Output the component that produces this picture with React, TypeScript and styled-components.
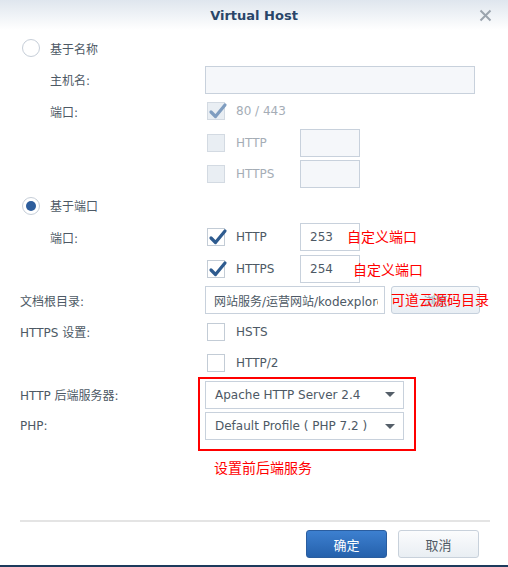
import React from 'react';
import styled, { createGlobalStyle, css } from 'styled-components';

const Global = createGlobalStyle`
  html, body { margin: 0; padding: 0; background: #ffffff; }
  body {
    font-family: "DejaVu Sans", "Noto Sans CJK SC", sans-serif;
    font-size: 12px;
    color: #4d5965;
  }
  * { box-sizing: border-box; }
`;

const Dialog = styled.div`
  width: 508px;
  height: 567px;
  display: flex;
  flex-direction: column;
  background: #ffffff;
  border-bottom: 2px solid #1d3a5c;
`;

const TitleBar = styled.div`
  height: 30px;
  flex: none;
  display: grid;
  grid-template-columns: 1fr auto 1fr;
  align-items: center;
  background: linear-gradient(#dfe6ee, #ffffff);
`;

const Title = styled.div`
  grid-column: 2;
  font-size: 13px;
  font-weight: bold;
  color: #2a4669;
`;

const Close = styled.div`
  grid-column: 3;
  justify-self: end;
  margin-right: 16px;
  width: 13px;
  height: 13px;
  display: flex;
`;

const Body = styled.div`
  flex: 1;
  display: flex;
  flex-direction: column;
  gap: 3.5px;
  padding: 4px 0 0 20px;
`;

const Row = styled.div`
  display: flex;
  align-items: center;
  height: 28px;
`;

const Label = styled.div<{ $indent?: boolean }>`
  width: 185px;
  flex: none;
  padding-left: ${(p) => (p.$indent ? '30px' : '0')};
  color: #4d5965;
`;

const RadioWrap = styled.div`
  display: flex;
  align-items: center;
  gap: 10px;
  margin-left: 2px;
`;

const RadioCircle = styled.span<{ $on?: boolean }>`
  width: 18px;
  height: 18px;
  border-radius: 50%;
  border: 1px solid #c6ced8;
  background: #ffffff;
  display: flex;
  align-items: center;
  justify-content: center;
  &::after {
    content: '';
    width: 10px;
    height: 10px;
    border-radius: 50%;
    background: ${(p) => (p.$on ? '#2d5d9c' : 'transparent')};
  }
`;

const Control = styled.div`
  display: flex;
  align-items: center;
`;

const CheckItem = styled.div<{ $disabled?: boolean }>`
  width: 95px;
  flex: none;
  display: flex;
  align-items: center;
  gap: 11px;
  padding-left: 2px;
  color: ${(p) => (p.$disabled ? '#a5adb6' : '#4d5965')};
`;

const Box = styled.span<{ $disabled?: boolean }>`
  width: 18px;
  height: 18px;
  flex: none;
  position: relative;
  border: 1px solid ${(p) => (p.$disabled ? '#d3dae2' : '#c3ccd6')};
  background: ${(p) => (p.$disabled ? '#e9eef3' : '#ffffff')};
  & > svg {
    position: absolute;
    left: 0;
    top: -2px;
  }
`;

const fieldBase = css`
  height: 28px;
  border: 1px solid #c8d1dc;
  font-family: "DejaVu Sans", "Noto Sans CJK SC", sans-serif;
  font-size: 12px;
  color: #4d5965;
  outline: none;
`;

const TextField = styled.input<{ $w: number; $disabled?: boolean }>`
  ${fieldBase};
  width: ${(p) => p.$w}px;
  padding: 0 6px 0 ${(p) => (p.$w < 80 ? 9 : 8)}px;
  background: ${(p) => (p.$disabled ? '#f5f7fa' : '#ffffff')};
`;

const PortWrap = styled.div`
  position: relative;
  display: flex;
`;

const Note = styled.span<{ $left: number; $dy?: number }>`
  position: absolute;
  left: ${(p) => p.$left}px;
  top: ${(p) => 3 + (p.$dy || 0)}px;
  white-space: nowrap;
  font-family: "Noto Sans CJK SC", sans-serif;
  font-size: 14px;
  line-height: 20px;
  color: #ff0000;
`;

const BrowseWrap = styled.div`
  position: relative;
  margin-left: 6px;
`;

const Browse = styled.button`
  width: 89px;
  height: 28px;
  border: 1px solid #c5d0dc;
  border-radius: 3px;
  background: linear-gradient(#f7f9fb, #e8eef4);
  font-family: "Noto Sans CJK SC", sans-serif;
  font-size: 12px;
  color: #8e99a5;
  padding: 0;
`;

const SelectGroup = styled.div`
  position: relative;
  display: flex;
  flex-direction: column;
  gap: 3.5px;
`;

const Highlight = styled.div`
  position: absolute;
  left: 178px;
  top: -3.5px;
  width: 218px;
  height: 74px;
  border: 2px solid #ff0000;
  pointer-events: none;
`;

const Select = styled.div`
  ${fieldBase};
  width: 199px;
  display: flex;
  align-items: center;
  justify-content: space-between;
  padding: 0 8px 0 9px;
  background: #ffffff;
`;

const Caret = styled.span`
  width: 0;
  height: 0;
  border-left: 5px solid transparent;
  border-right: 5px solid transparent;
  border-top: 5px solid #555f69;
`;

const AnnotRow = styled.div`
  margin-top: 9.5px;
  padding-left: 194px;
  height: 28px;
  display: flex;
  align-items: center;
  font-family: "Noto Sans CJK SC", sans-serif;
  font-size: 14px;
  color: #ff0000;
`;

const Footer = styled.div`
  flex: none;
  margin: 0 18px 0 20px;
  border-top: 2px solid #e4e4e4;
  padding: 8px 11px 7px 0;
  display: flex;
  justify-content: flex-end;
  gap: 11px;
`;

const Btn = styled.button<{ $primary?: boolean }>`
  width: 81px;
  height: 28px;
  border-radius: 3px;
  font-family: "Noto Sans CJK SC", sans-serif;
  font-size: 13px;
  padding: 0;
  ${(p) =>
    p.$primary
      ? css`
          border: 1px solid #2a5d9f;
          background: linear-gradient(#3d80d0, #2561ac);
          color: #ffffff;
        `
      : css`
          border: 1px solid #c8d1db;
          background: linear-gradient(#fbfcfd, #e9eef3);
          color: #505a64;
        `}
`;

const CheckMark = ({ color }: { color: string }) => (
  <svg width="20" height="20" viewBox="0 0 20 20">
    <path d="M3 11 L7.5 15.5 L17 4" fill="none" stroke={color} strokeWidth="3.2" strokeLinecap="round" strokeLinejoin="round" />
  </svg>
);

const Checkbox = ({ checked, disabled }: { checked?: boolean; disabled?: boolean }) => (
  <Box $disabled={disabled}>{checked && <CheckMark color={disabled ? '#7f9dc0' : '#2e5b8f'} />}</Box>
);

const Radio = ({ on, label }: { on?: boolean; label: string }) => (
  <RadioWrap>
    <RadioCircle $on={on} />
    <span>{label}</span>
  </RadioWrap>
);

export default function App() {
  return (
    <>
      <Global />
      <Dialog>
        <TitleBar>
          <Title>Virtual Host</Title>
          <Close>
            <svg width="13" height="13" viewBox="0 0 13 13">
              <path d="M1.5 1.5 L11.5 11.5 M11.5 1.5 L1.5 11.5" stroke="#9ba4ae" strokeWidth="2" />
            </svg>
          </Close>
        </TitleBar>
        <Body>
          <Row>
            <Radio label="基于名称" />
          </Row>
          <Row>
            <Label $indent>主机名:</Label>
            <TextField $w={270} $disabled readOnly />
          </Row>
          <Row>
            <Label $indent>端口:</Label>
            <Control>
              <CheckItem $disabled>
                <Checkbox checked disabled />
                <span>80 / 443</span>
              </CheckItem>
            </Control>
          </Row>
          <Row>
            <Label $indent />
            <Control>
              <CheckItem $disabled>
                <Checkbox disabled />
                <span>HTTP</span>
              </CheckItem>
              <TextField $w={60} $disabled readOnly />
            </Control>
          </Row>
          <Row>
            <Label $indent />
            <Control>
              <CheckItem $disabled>
                <Checkbox disabled />
                <span>HTTPS</span>
              </CheckItem>
              <TextField $w={60} $disabled readOnly />
            </Control>
          </Row>
          <Row>
            <Radio on label="基于端口" />
          </Row>
          <Row>
            <Label $indent>端口:</Label>
            <Control>
              <CheckItem>
                <Checkbox checked />
                <span>HTTP</span>
              </CheckItem>
              <PortWrap>
                <TextField $w={60} defaultValue="253" />
                <Note $left={47}>自定义端口</Note>
              </PortWrap>
            </Control>
          </Row>
          <Row>
            <Label $indent />
            <Control>
              <CheckItem>
                <Checkbox checked />
                <span>HTTPS</span>
              </CheckItem>
              <PortWrap>
                <TextField $w={60} defaultValue="254" />
                <Note $left={53} $dy={1.5}>自定义端口</Note>
              </PortWrap>
            </Control>
          </Row>
          <Row>
            <Label>文档根目录:</Label>
            <Control>
              <TextField $w={180} defaultValue="网站服务/运营网站/kodexplorer" />
              <BrowseWrap>
                <Browse>浏览</Browse>
                <Note $left={0}>可道云源码目录</Note>
              </BrowseWrap>
            </Control>
          </Row>
          <Row>
            <Label>HTTPS 设置:</Label>
            <Control>
              <CheckItem>
                <Checkbox />
                <span>HSTS</span>
              </CheckItem>
            </Control>
          </Row>
          <Row>
            <Label />
            <Control>
              <CheckItem>
                <Checkbox />
                <span>HTTP/2</span>
              </CheckItem>
            </Control>
          </Row>
          <SelectGroup>
            <Row>
              <Label>HTTP 后端服务器:</Label>
              <Select>
                <span>Apache HTTP Server 2.4</span>
                <Caret />
              </Select>
            </Row>
            <Row>
              <Label>PHP:</Label>
              <Select>
                <span>Default Profile ( PHP 7.2 )</span>
                <Caret />
              </Select>
            </Row>
            <Highlight />
          </SelectGroup>
          <AnnotRow>设置前后端服务</AnnotRow>
        </Body>
        <Footer>
          <Btn $primary>确定</Btn>
          <Btn>取消</Btn>
        </Footer>
      </Dialog>
    </>
  );
}
